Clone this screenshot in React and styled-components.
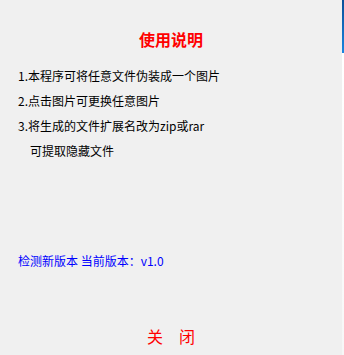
import styled, { createGlobalStyle } from "styled-components"

const GlobalStyle = createGlobalStyle`
    html, body {
        margin: 0;
        padding: 0;
        background: #F0F0F0;
    }
    body {
        font-family: "Noto Sans CJK SC", "Noto Sans", sans-serif;
    }
`

export default function App() {
    return (
        <>
            <GlobalStyle />
            <Frame>
                <Dialog>
                    <Title>使用说明</Title>

                    <Steps>
                        <Step>1.本程序可将任意文件伪装成一个图片</Step>
                        <Step>2.点击图片可更换任意图片</Step>
                        <Step>3.将生成的文件扩展名改为zip或rar</Step>
                        <Step indent>可提取隐藏文件</Step>
                    </Steps>

                    <Version>检测新版本 当前版本：v1.0</Version>

                    <CloseButton>关　闭</CloseButton>
                </Dialog>

                <Edge />
            </Frame>
        </>
    )
}

const Frame = styled.div`
    width: 344px;
    height: 355px;
    display: flex;
    flex-direction: row;
    overflow: hidden;
`

const Dialog = styled.div`
    flex: 1;
    display: flex;
    flex-direction: column;
    padding-top: 29px;
    box-sizing: border-box;
`

const Edge = styled.div`
    width: 2px;
    height: 100%;
    background: linear-gradient(to bottom, #0b4f98 0px, #1a86e0 53px, #ffffff 53px, #f7f7f7 100%);
`

const Title = styled.div`
    height: 20px;
    line-height: 20px;
    font-size: 16px;
    font-weight: bold;
    color: #FF0000;
    text-align: center;
`

const Steps = styled.div`
    display: flex;
    flex-direction: column;
    margin-top: 14px;
    padding-left: 18px;
`

const Step = styled.div`
    height: 25px;
    line-height: 25px;
    font-size: 12px;
    color: #000000;
    padding-left: ${props => props.indent ? "12px" : "0"};
`

const Version = styled.div`
    margin-top: 90px;
    padding-left: 18px;
    height: 16px;
    line-height: 16px;
    font-size: 12px;
    color: #0000FF;
    cursor: pointer;
`

const CloseButton = styled.div`
    margin-top: 57px;
    height: 20px;
    line-height: 20px;
    font-size: 16px;
    color: #FF0000;
    text-align: center;
    cursor: pointer;
`
